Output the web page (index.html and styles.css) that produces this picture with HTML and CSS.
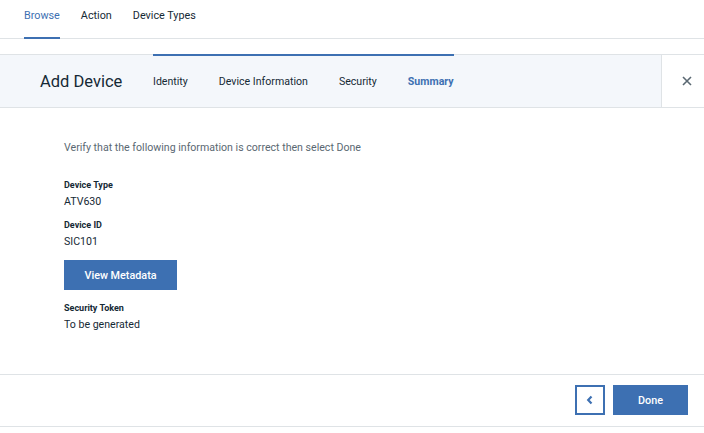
FILE: index.html
```html
<!DOCTYPE html>
<html>
<head>
<meta charset="utf-8">
<link rel="stylesheet" href="styles.css">
</head>
<body>
<nav class="topnav">
  <a class="tab active">Browse</a>
  <a class="tab">Action</a>
  <a class="tab">Device Types</a>
</nav>
<header class="wizard-head">
  <h1 class="title">Add Device</h1>
  <ol class="steps">
    <li class="step">Identity</li>
    <li class="step">Device Information</li>
    <li class="step">Security</li>
    <li class="step current">Summary</li>
  </ol>
  <button class="close" aria-label="Close">
    <svg width="10" height="10" viewBox="0 0 10 10"><path d="M1 1 L9 9 M9 1 L1 9" stroke="#5a6872" stroke-width="1.6" fill="none"/></svg>
  </button>
</header>
<main class="content">
  <p class="intro">Verify that the following information is correct then select Done</p>
  <div class="field">
    <div class="label">Device Type</div>
    <div class="value">ATV630</div>
  </div>
  <div class="field">
    <div class="label">Device ID</div>
    <div class="value">SIC101</div>
  </div>
  <button class="btn primary meta">View Metadata</button>
  <div class="field">
    <div class="label">Security Token</div>
    <div class="value">To be generated</div>
  </div>
</main>
<footer class="wizard-foot">
  <button class="btn back" aria-label="Back">
    <svg width="8" height="10" viewBox="0 0 8 10"><path d="M5.5 1.5 L2.2 5 L5.5 8.5" stroke="#3d70b2" stroke-width="2.2" fill="none"/></svg>
  </button>
  <button class="btn primary done">Done</button>
</footer>
</body>
</html>
```
FILE: styles.css
```css
* { box-sizing: border-box; }
body {
  margin: 0;
  font-family: Roboto, "Liberation Sans", sans-serif;
  color: #152935;
  background: #fff;
}
.topnav {
  display: flex;
  gap: 21px;
  padding-left: 24px;
  height: 39px;
  border-bottom: 1px solid #dfe3e6;
}
.tab {
  position: relative;
  font-size: 10.8px;
  line-height: 32px;
  color: #152935;
}
.tab.active { color: #3d70b2; }
.tab.active::after {
  content: "";
  position: absolute;
  left: 0;
  right: 0;
  bottom: -1px;
  height: 2px;
  background: #3d70b2;
}
.wizard-head {
  margin-top: 15px;
  display: flex;
  height: 54px;
  background: #f4f7fb;
  border-top: 1px solid #dfe3e6;
  border-bottom: 1px solid #dfe3e6;
}
.title {
  margin: 0;
  padding-left: 40px;
  width: 153px;
  font-size: 16.5px;
  font-weight: 400;
  line-height: 53px;
  color: #152935;
}
.steps {
  list-style: none;
  margin: -1px 0 0;
  padding: 0;
  display: flex;
  gap: 31px;
  border-top: 2px solid #3d70b2;
  height: 54px;
}
.step {
  font-size: 10.6px;
  line-height: 52px;
  color: #152935;
}
.step.current {
  color: #3d70b2;
  font-weight: 700;
}
.close {
  margin-left: auto;
  width: 43px;
  border: 0;
  border-left: 1px solid #dfe3e6;
  background: #fff;
  display: flex;
  align-items: center;
  justify-content: center;
  padding: 0 0 0 8px;
}
.content {
  padding: 32px 0 0 64px;
}
.intro {
  margin: 0 0 22px;
  font-size: 10.6px;
  line-height: 16px;
  color: #5a6872;
}
.field + .field { margin-top: 6px; }
.label {
  font-size: 9px;
  font-weight: 700;
  line-height: 14px;
  color: #152935;
}
.value {
  font-size: 10.6px;
  line-height: 20px;
  color: #152935;
}
.btn {
  font-family: inherit;
  font-size: 10.8px;
  height: 30px;
  border: 0;
  padding: 0;
}
.primary {
  background: #3d70b2;
  color: #fff;
  font-weight: 500;
}
.meta {
  display: block;
  width: 113px;
  margin: 8px 0 11px;
}
.wizard-foot {
  margin-top: 39px;
  display: flex;
  justify-content: flex-end;
  gap: 8px;
  padding: 10px 16px 11px;
  border-top: 1px solid #dfe3e6;
  border-bottom: 1px solid #dfe3e6;
}
.back {
  width: 30px;
  background: #fff;
  border: 2px solid #3d70b2;
  display: flex;
  align-items: center;
  justify-content: center;
}
.done { width: 75px; }
```
